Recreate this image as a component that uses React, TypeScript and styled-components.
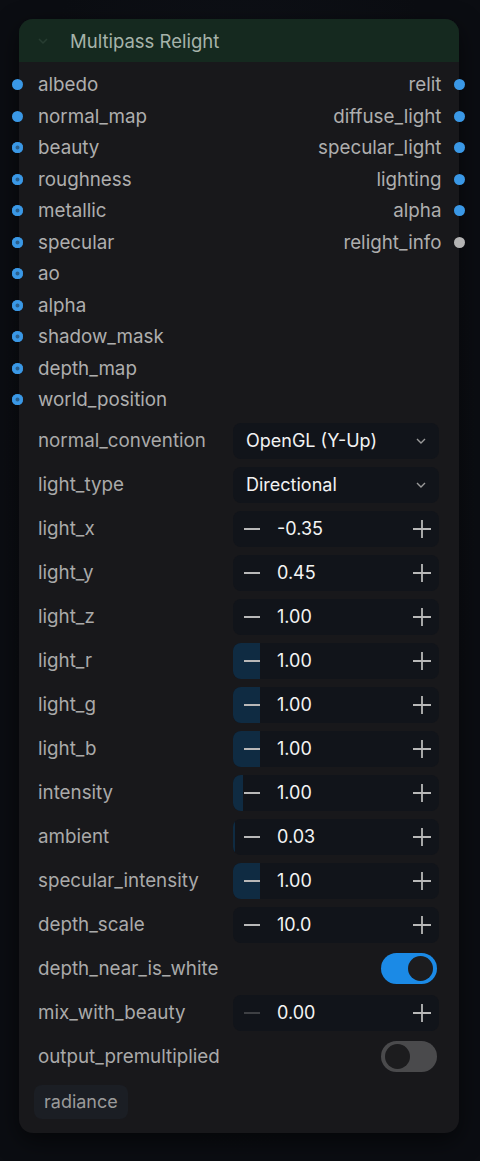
import React from "react";
import styled, { createGlobalStyle } from "styled-components";

const Global = createGlobalStyle`
  html, body { margin: 0; padding: 0; background: #0b0d12; }
  body { font-family: Inter, "Noto Sans", "Liberation Sans", sans-serif; }
  * { box-sizing: border-box; }
`;

const Page = styled.div`
  width: 480px;
  height: 1161px;
  padding: 19px 21px 0 19px;
  background: radial-gradient(ellipse at 50% 40%, #10131a 0%, #0b0d12 70%);
`;

const Card = styled.div`
  width: 440px;
  background: #18181b;
  border-radius: 14px;
  box-shadow: 0 8px 24px rgba(0, 0, 0, 0.55);
  padding-bottom: 14px;
`;

const Header = styled.div`
  height: 43px;
  background: #15291f;
  border-radius: 14px 14px 0 0;
  display: flex;
  align-items: center;
  padding-left: 18px;
  gap: 21px;
`;

const Collapse = styled.svg`
  width: 12px;
  height: 12px;
  opacity: 0.2;
`;

const Title = styled.div`
  color: #a6b3aa;
  font-size: 18.5px;
`;

const Slots = styled.div`
  display: grid;
  grid-template-columns: 1fr 1fr;
  padding-top: 7px;
`;

const Column = styled.div`
  display: flex;
  flex-direction: column;
`;

const SlotRow = styled.div<{ $out?: boolean }>`
  height: 31.5px;
  display: flex;
  align-items: center;
  justify-content: ${(p) => (p.$out ? "flex-end" : "flex-start")};
  gap: ${(p) => (p.$out ? "12.5px" : "15px")};
  margin-left: ${(p) => (p.$out ? "0" : "-7px")};
  margin-right: ${(p) => (p.$out ? "-6px" : "0")};
  color: #aeaeae;
  font-size: 18.8px;
  white-space: nowrap;
`;

const Dot = styled.span<{ $kind: "solid" | "optional" | "gray" }>`
  width: 11px;
  height: 11px;
  border-radius: 50%;
  flex: none;
  background: ${(p) => (p.$kind === "gray" ? "#b4b4b4" : "#3a98e6")};
  box-shadow: ${(p) =>
    p.$kind === "optional" ? "inset 0 0 0 3.5px #3a98e6, inset 0 0 0 6px #2a5f8d" : "none"};
`;

const Widgets = styled.div`
  display: flex;
  flex-direction: column;
  padding-top: 3px;
`;

const WidgetRow = styled.div`
  height: 44px;
  display: flex;
  align-items: center;
  justify-content: space-between;
  padding-left: 19px;
  padding-right: 20px;
`;

const Label = styled.div`
  color: #aaaaaa;
  font-size: 18.8px;
  white-space: nowrap;
`;

const Box = styled.div`
  position: relative;
  width: 206px;
  height: 36px;
  background: #11141a;
  border-radius: 8px;
  overflow: hidden;
  display: flex;
  align-items: center;
`;

const Fill = styled.div`
  position: absolute;
  left: 0;
  top: 0;
  bottom: 0;
  background: #0f2b42;
`;

const SelectText = styled.div`
  flex: 1;
  padding-left: 13px;
  color: #f2f2f2;
  font-size: 18px;
`;

const Chevron = styled.svg`
  width: 14px;
  height: 14px;
  margin-right: 11px;
`;

const StepBtn = styled.div<{ $dim?: boolean; $w: number }>`
  position: relative;
  width: ${(p) => p.$w}px;
  height: 36px;
  display: flex;
  align-items: center;
  justify-content: center;
  opacity: ${(p) => (p.$dim ? 0.3 : 1)};
`;

const Value = styled.div`
  position: relative;
  flex: 1;
  padding-left: 6px;
  color: #f4f4f4;
  font-size: 18px;
`;

const Toggle = styled.div<{ $on: boolean }>`
  width: 56px;
  height: 31px;
  border-radius: 16px;
  background: ${(p) => (p.$on ? "#1b8ae6" : "#4a4a4c")};
  display: flex;
  align-items: center;
  justify-content: ${(p) => (p.$on ? "flex-end" : "flex-start")};
  padding: 0 4px;
  margin-right: 2px;
`;

const Knob = styled.div`
  width: 25px;
  height: 25px;
  border-radius: 50%;
  background: #1c1c1e;
`;

const Footer = styled.div`
  padding: 6px 0 0 15px;
`;

const Chip = styled.div`
  display: inline-flex;
  align-items: center;
  height: 34px;
  padding: 0 10px;
  background: #1b1e24;
  border-radius: 8px;
  color: #9a9a9a;
  font-size: 18px;
`;

const Minus = () => (
  <svg width="18" height="18" viewBox="0 0 18 18">
    <path d="M1 9h16" stroke="#b8b8b8" strokeWidth="1.8" />
  </svg>
);

const Plus = () => (
  <svg width="20" height="20" viewBox="0 0 20 20">
    <path d="M1 10h18M10 1v18" stroke="#b8b8b8" strokeWidth="1.8" />
  </svg>
);

const inputs: [string, "solid" | "optional"][] = [
  ["albedo", "solid"],
  ["normal_map", "solid"],
  ["beauty", "optional"],
  ["roughness", "optional"],
  ["metallic", "optional"],
  ["specular", "optional"],
  ["ao", "optional"],
  ["alpha", "optional"],
  ["shadow_mask", "optional"],
  ["depth_map", "optional"],
  ["world_position", "optional"],
];

const outputs: [string, "solid" | "gray"][] = [
  ["relit", "solid"],
  ["diffuse_light", "solid"],
  ["specular_light", "solid"],
  ["lighting", "solid"],
  ["alpha", "solid"],
  ["relight_info", "gray"],
];

type W =
  | { kind: "select"; label: string; value: string }
  | { kind: "number"; label: string; value: string; fill: number; dim?: boolean }
  | { kind: "toggle"; label: string; on: boolean };

const widgets: W[] = [
  { kind: "select", label: "normal_convention", value: "OpenGL (Y-Up)" },
  { kind: "select", label: "light_type", value: "Directional" },
  { kind: "number", label: "light_x", value: "-0.35", fill: 0 },
  { kind: "number", label: "light_y", value: "0.45", fill: 0 },
  { kind: "number", label: "light_z", value: "1.00", fill: 0 },
  { kind: "number", label: "light_r", value: "1.00", fill: 27 },
  { kind: "number", label: "light_g", value: "1.00", fill: 27 },
  { kind: "number", label: "light_b", value: "1.00", fill: 27 },
  { kind: "number", label: "intensity", value: "1.00", fill: 10 },
  { kind: "number", label: "ambient", value: "0.03", fill: 2 },
  { kind: "number", label: "specular_intensity", value: "1.00", fill: 27 },
  { kind: "number", label: "depth_scale", value: "10.0", fill: 0 },
  { kind: "toggle", label: "depth_near_is_white", on: true },
  { kind: "number", label: "mix_with_beauty", value: "0.00", fill: 0, dim: true },
  { kind: "toggle", label: "output_premultiplied", on: false },
];

function Widget({ w }: { w: W }) {
  if (w.kind === "toggle") {
    return (
      <Toggle $on={w.on}>
        <Knob />
      </Toggle>
    );
  }
  if (w.kind === "select") {
    return (
      <Box>
        <SelectText>{w.value}</SelectText>
        <Chevron viewBox="0 0 14 14">
          <path d="M3 5l4 4 4-4" fill="none" stroke="#9a9a9a" strokeWidth="1.4" />
        </Chevron>
      </Box>
    );
  }
  return (
    <Box>
      {w.fill > 0 && <Fill style={{ width: w.fill }} />}
      <StepBtn $w={38} $dim={w.dim}>
        <Minus />
      </StepBtn>
      <Value>{w.value}</Value>
      <StepBtn $w={34}>
        <Plus />
      </StepBtn>
    </Box>
  );
}

export default function App() {
  return (
    <>
      <Global />
      <Page>
        <Card>
          <Header>
            <Collapse viewBox="0 0 12 12">
              <path d="M2 4l4 4 4-4" fill="none" stroke="#6f8a78" strokeWidth="1.5" />
            </Collapse>
            <Title>Multipass Relight</Title>
          </Header>
          <Slots>
            <Column>
              {inputs.map(([name, kind]) => (
                <SlotRow key={name}>
                  <Dot $kind={kind} />
                  {name}
                </SlotRow>
              ))}
            </Column>
            <Column>
              {outputs.map(([name, kind]) => (
                <SlotRow key={name} $out>
                  {name}
                  <Dot $kind={kind} />
                </SlotRow>
              ))}
            </Column>
          </Slots>
          <Widgets>
            {widgets.map((w) => (
              <WidgetRow key={w.label}>
                <Label>{w.label}</Label>
                <Widget w={w} />
              </WidgetRow>
            ))}
          </Widgets>
          <Footer>
            <Chip>radiance</Chip>
          </Footer>
        </Card>
      </Page>
    </>
  );
}
